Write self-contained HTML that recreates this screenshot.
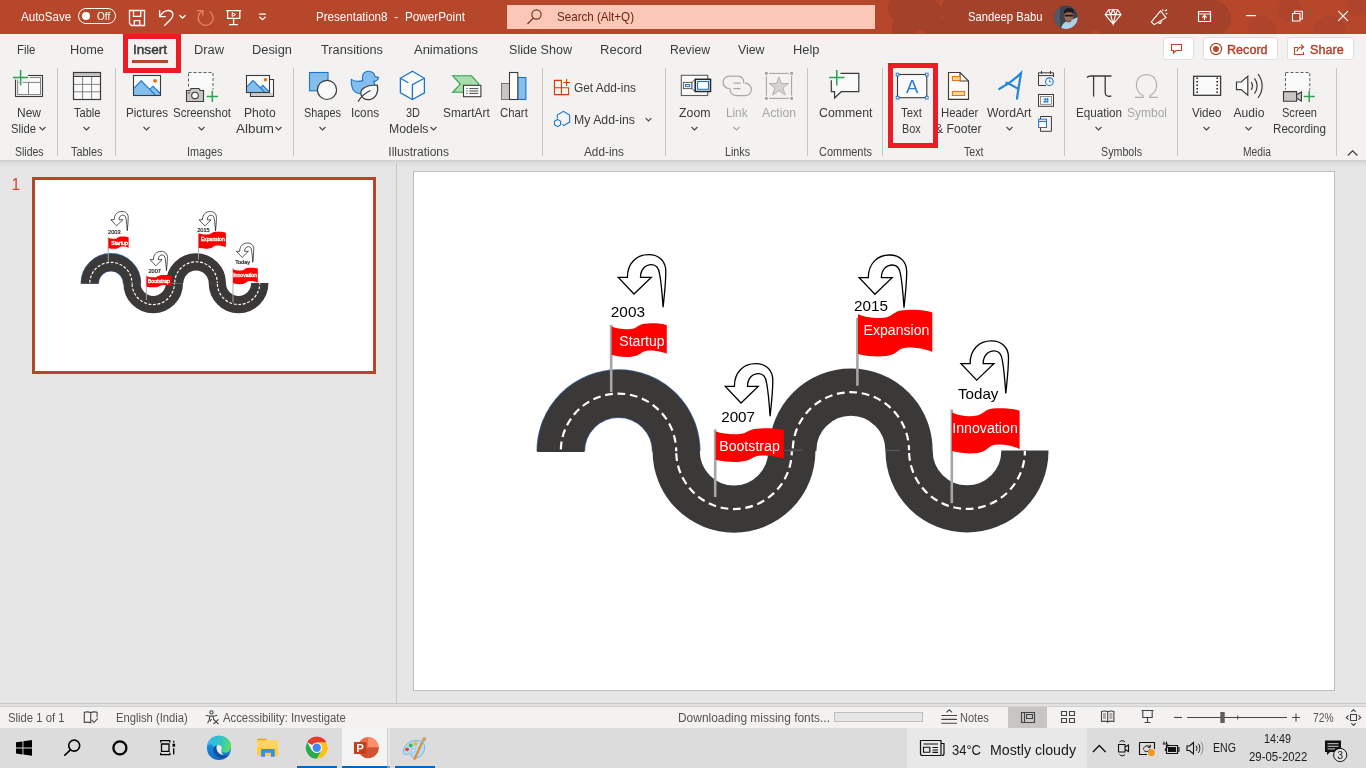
<!DOCTYPE html>
<html lang="en"><head><meta charset="utf-8"><title>Presentation8 - PowerPoint</title>
<style>
html,body{margin:0;padding:0;background:#e6e6e6;}
body{width:1366px;height:768px;overflow:hidden;font-family:"Liberation Sans",sans-serif;}
#app{position:relative;width:1366px;height:768px;overflow:hidden;background:#e6e6e6;}
#app div{position:absolute;box-sizing:border-box;}
svg.icons{position:absolute;left:0;top:0;will-change:transform;}
span.t{position:absolute;white-space:nowrap;display:inline-block;transform-origin:0 50%;}
#app #txt{left:0;top:0;width:1366px;height:768px;will-change:transform;pointer-events:none;}
</style></head>
<body>
<div id="app">
<!-- title bar -->
<div style="left:0;top:0;width:1366px;height:34px;background:#b7472a;overflow:hidden;">
  <svg width="1366" height="34" viewBox="0 0 1366 34" style="position:absolute;left:0;top:0;">
    <g fill="#a4412a">
      <circle cx="903" cy="8" r="15"/><circle cx="925" cy="14" r="17"/><circle cx="905" cy="27" r="13"/><circle cx="938" cy="30" r="12"/>
      <path d="M945 0 H1215 C1232 6 1238 22 1222 34 H1100 C1098 29 1094 29 1090 34 H945 C950 24 935 10 945 0 Z"/>
    </g>
    <g fill="#ae442b">
      <circle cx="1262" cy="30" r="14"/><circle cx="1290" cy="10" r="12"/><circle cx="1330" cy="32" r="16"/><circle cx="1357" cy="6" r="10"/>
    </g>
  </svg>
</div>
<div style="left:507px;top:5px;width:368px;height:24px;background:#fbc8b7;"></div>
<div style="left:78px;top:7.7px;width:38px;height:16.6px;border:1.2px solid #fff;border-radius:8.3px;"></div>
<div style="left:81.7px;top:12px;width:8px;height:8px;border-radius:50%;background:#fff;"></div>
<!-- avatar -->
<div style="left:1054px;top:5px;width:24px;height:24px;">
<svg width="24" height="24" viewBox="0 0 24 24" style="position:absolute;left:0;top:0;">
  <clipPath id="av"><circle cx="12" cy="12.300" r="11.700"/></clipPath>
  <g clip-path="url(#av)">
    <rect width="24" height="24" fill="#3d4450"/>
    <rect x="0" y="0" width="6" height="24" fill="#4f5a68"/>
    <path d="M7 24 C8 18 12 16 16 15.500 L24 12 V24 Z" fill="#a9d3e8"/>
    <ellipse cx="14.800" cy="10.800" rx="4.600" ry="5.600" fill="#9a6a58"/>
    <path d="M9.800 9 C9.500 4 13 2.500 16 3 C19.500 3.500 20.500 6.500 19.800 9 C18 6.800 13 6.500 9.800 9 Z" fill="#1d1a1c"/>
    <path d="M10.800 9.800 H19 V11.600 H15.500 L15 10.800 L14.500 11.600 H10.800 Z" fill="#17171a"/>
    <path d="M12.500 15 C14 16.600 16 16.400 17.500 14.800 L17 17 L13 17.500 Z" fill="#7d5345"/>
  </g>
</svg>
</div>
<!-- ribbon -->
<div style="left:0;top:34px;width:1366px;height:126px;background:#f3f2f1;"></div>
<div style="left:0;top:160px;width:1366px;height:7px;background:linear-gradient(#cfcfcf,#dcdcdc 40%,#e6e6e6);"></div>
<!-- right buttons -->
<div style="left:1163px;top:37px;width:31px;height:23px;background:#fff;border:1px solid #e1dfdd;border-radius:3px;"></div>
<div style="left:1203px;top:37px;width:75px;height:23px;background:#fff;border:1px solid #e1dfdd;border-radius:3px;"></div>
<div style="left:1287px;top:37px;width:67px;height:23px;background:#fff;border:1px solid #e1dfdd;border-radius:3px;"></div>
<!-- insert underline + red boxes -->
<div style="left:132px;top:59.5px;width:36px;height:3px;background:#b7472a;"></div>
<div style="left:123px;top:34px;width:58px;height:39px;border:5px solid #ed1c24;z-index:5;"></div>
<div style="left:888px;top:63px;width:50px;height:84.5px;border:5px solid #ed1c24;z-index:5;"></div>
<!-- group separators -->
<div style="left:57px;top:68px;width:1px;height:88px;background:#c8c6c4;"></div>
<div style="left:115px;top:68px;width:1px;height:88px;background:#c8c6c4;"></div>
<div style="left:293px;top:68px;width:1px;height:88px;background:#c8c6c4;"></div>
<div style="left:542px;top:68px;width:1px;height:88px;background:#c8c6c4;"></div>
<div style="left:665px;top:68px;width:1px;height:88px;background:#c8c6c4;"></div>
<div style="left:807px;top:68px;width:1px;height:88px;background:#c8c6c4;"></div>
<div style="left:882px;top:68px;width:1px;height:88px;background:#c8c6c4;"></div>
<div style="left:1064px;top:68px;width:1px;height:88px;background:#c8c6c4;"></div>
<div style="left:1177px;top:68px;width:1px;height:88px;background:#c8c6c4;"></div>
<div style="left:1336px;top:68px;width:1px;height:88px;background:#c8c6c4;"></div>
<!-- workspace -->
<div style="left:396px;top:163px;width:1px;height:540px;background:#c6c6c6;"></div>
<div style="left:32px;top:177px;width:344px;height:197px;border:3px solid #b7452a;background:#fff;overflow:hidden;">
  <div style="left:0.5px;top:1px;width:337px;height:190px;will-change:transform;"><svg width="337" height="190" viewBox="0 0 920 518" style="position:absolute;left:0;top:0;">
<g transform="translate(-414,-172)">
<path d="M560.8 451.3 A57.7 57.7 0 0 1 676.2 451.3" fill="none" stroke="#3f64a8" stroke-width="50.5"/>
<path d="M560.8 451.90000000000003 V451.3 A57.7 57.7 0 0 1 676.2 451.3 V451.90000000000003" fill="none" stroke="#3b3838" stroke-width="47.2"/>
<path d="M676.2 450.7 V451.3 A57.8 57.8 0 0 0 791.8 451.3 V450.7" fill="none" stroke="#3b3838" stroke-width="47.2"/>
<path d="M792.8 450.90000000000003 V450.3 A58.1 58.1 0 0 1 909.0 450.3 V450.90000000000003" fill="none" stroke="#3b3838" stroke-width="47.2"/>
<path d="M909.1 450.4 V451.0 A57.9 57.9 0 0 0 1024.9 451.0 V450.4" fill="none" stroke="#3b3838" stroke-width="47.2"/>
<path d="M784 450.2 H803 M886 450.4 H900" stroke="#6b6969" stroke-width="0.8" fill="none"/>
<path d="M560.8 451.3 A57.7 57.7 0 0 1 676.2 451.3" fill="none" stroke="#fff" stroke-width="3.2" stroke-dasharray="7.8 4.7" stroke-dashoffset="-2"/>
<path d="M676.2 451.3 A57.8 57.8 0 0 0 791.8 451.3" fill="none" stroke="#fff" stroke-width="3.2" stroke-dasharray="7.8 4.7" stroke-dashoffset="-2"/>
<path d="M792.8 450.3 A58.1 58.1 0 0 1 909.0 450.3" fill="none" stroke="#fff" stroke-width="3.2" stroke-dasharray="7.8 4.7" stroke-dashoffset="-2"/>
<path d="M909.1 451.0 A57.9 57.9 0 0 0 1024.9 451.0" fill="none" stroke="#fff" stroke-width="3.2" stroke-dasharray="7.8 4.7" stroke-dashoffset="-2"/>
<path d="M611.2 324.8 V392" stroke="#a6a6a6" stroke-width="2.6" fill="none"/>
<path d="M715.2 429.4 V497" stroke="#a6a6a6" stroke-width="2.6" fill="none"/>
<path d="M857.4 317.7 V385.8" stroke="#a6a6a6" stroke-width="2.6" fill="none"/>
<path d="M951.8 409.5 V503.2" stroke="#a6a6a6" stroke-width="2.6" fill="none"/>
<path d="M611.7 326.4 C617.2 328.8 628.2 330.1 633.7 328.5 C638.1 326.8 639.2 323.4 648.1 323.4 C655.8 323.1 662.9 323.7 666.8 325.3 L666.8 353.7 C662.9 351.7 655.8 350.4 649.2 350.4 C642.6 350.4 641.5 353.7 637.0 355.4 C632.6 357.1 622.7 357.8 611.7 355.1 Z" fill="#ff0000"/>
<text x="619.3" y="346.4" font-family="Liberation Sans, sans-serif" font-size="14" fill="#fff" stroke="#fff" stroke-width="0.9" textLength="45.4" lengthAdjust="spacingAndGlyphs">Startup</text>
<path d="M715.7 431.4 C722.5 433.8 736.1 435.1 742.9 433.5 C748.4 431.8 749.8 428.4 760.6 428.4 C770.2 428.1 779.0 428.7 783.8 430.3 L783.8 458.7 C779.0 456.7 770.2 455.4 762.0 455.4 C753.8 455.4 752.5 458.7 747.0 460.4 C741.6 462.1 729.3 462.8 715.7 460.1 Z" fill="#ff0000"/>
<text x="719.2" y="451.4" font-family="Liberation Sans, sans-serif" font-size="14" fill="#fff" stroke="#fff" stroke-width="0.9" textLength="60.6" lengthAdjust="spacingAndGlyphs">Bootstrap</text>
<path d="M858.0 314.2 C865.4 317.5 880.3 319.3 887.7 317.0 C893.7 314.7 895.1 310.0 907.0 310.0 C917.4 309.5 927.1 310.5 932.3 312.6 L932.3 352.0 C927.1 349.2 917.4 347.4 908.5 347.4 C899.6 347.4 898.1 352.0 892.2 354.4 C886.2 356.7 872.9 357.6 858.0 353.9 Z" fill="#ff0000"/>
<text x="863.5" y="335.3" font-family="Liberation Sans, sans-serif" font-size="14" fill="#fff" stroke="#fff" stroke-width="0.9" textLength="65.9" lengthAdjust="spacingAndGlyphs">Expansion</text>
<path d="M951.9 412.4 C958.7 415.6 972.2 417.4 979.0 415.1 C984.4 412.8 985.8 408.3 996.6 408.3 C1006.1 407.8 1014.9 408.8 1019.6 410.8 L1019.6 449.2 C1014.9 446.4 1006.1 444.6 997.9 444.6 C989.8 444.6 988.5 449.2 983.0 451.4 C977.6 453.7 965.4 454.6 951.9 451.0 Z" fill="#ff0000"/>
<text x="952.2" y="433.0" font-family="Liberation Sans, sans-serif" font-size="14" fill="#fff" stroke="#fff" stroke-width="0.9" textLength="65.6" lengthAdjust="spacingAndGlyphs">Innovation</text>
<text x="610.8" y="316.8" font-family="Liberation Sans, sans-serif" font-size="14.2" fill="#222" stroke="#222" stroke-width="0.5" textLength="34.2" lengthAdjust="spacingAndGlyphs">2003</text>
<text x="721.2" y="422.4" font-family="Liberation Sans, sans-serif" font-size="14.2" fill="#222" stroke="#222" stroke-width="0.5" textLength="33.8" lengthAdjust="spacingAndGlyphs">2007</text>
<text x="854.1" y="310.7" font-family="Liberation Sans, sans-serif" font-size="14.2" fill="#222" stroke="#222" stroke-width="0.5" textLength="34.0" lengthAdjust="spacingAndGlyphs">2015</text>
<text x="958.0" y="399.4" font-family="Liberation Sans, sans-serif" font-size="14.2" fill="#222" stroke="#222" stroke-width="0.5" textLength="40.4" lengthAdjust="spacingAndGlyphs">Today</text>
<path transform="translate(618.3 277.4)" d="M0 0 L9.1 0 C9.1 -14 18 -22.7 30.3 -22.7 C41 -22.7 47.5 -16 47.5 -6 C47.5 6 46 18 44.8 29.9 C44 18 43 6 41.4 -3 C40.5 -9.5 37.5 -12.7 33.3 -12.7 C27 -12.7 22.2 -8 22.2 0 L32.9 0 L15.7 16.6 Z" fill="#fff" stroke="#000" stroke-width="1.8" stroke-linejoin="miter"/>
<path transform="translate(725.3 386.4)" d="M0 0 L9.1 0 C9.1 -14 18 -22.7 30.3 -22.7 C41 -22.7 47.5 -16 47.5 -6 C47.5 6 46 18 44.8 29.9 C44 18 43 6 41.4 -3 C40.5 -9.5 37.5 -12.7 33.3 -12.7 C27 -12.7 22.2 -8 22.2 0 L32.9 0 L15.7 16.6 Z" fill="#fff" stroke="#000" stroke-width="1.8" stroke-linejoin="miter"/>
<path transform="translate(859.2 277.7)" d="M0 0 L9.1 0 C9.1 -14 18 -22.7 30.3 -22.7 C41 -22.7 47.5 -16 47.5 -6 C47.5 6 46 18 44.8 29.9 C44 18 43 6 41.4 -3 C40.5 -9.5 37.5 -12.7 33.3 -12.7 C27 -12.7 22.2 -8 22.2 0 L32.9 0 L15.7 16.6 Z" fill="#fff" stroke="#000" stroke-width="1.8" stroke-linejoin="miter"/>
<path transform="translate(961 363.6)" d="M0 0 L9.1 0 C9.1 -14 18 -22.7 30.3 -22.7 C41 -22.7 47.5 -16 47.5 -6 C47.5 6 46 18 44.8 29.9 C44 18 43 6 41.4 -3 C40.5 -9.5 37.5 -12.7 33.3 -12.7 C27 -12.7 22.2 -8 22.2 0 L32.9 0 L15.7 16.6 Z" fill="#fff" stroke="#000" stroke-width="1.8" stroke-linejoin="miter"/>
</g></svg></div>
</div>
<div style="left:413px;top:171px;width:922px;height:520px;border:1px solid #bdbdbd;background:#fff;overflow:hidden;">
  <div style="left:0;top:0;width:920px;height:518px;will-change:transform;"><svg width="920" height="518" viewBox="0 0 920 518" style="position:absolute;left:0;top:0;">
<g transform="translate(-414,-172)">
<path d="M560.8 451.3 A57.7 57.7 0 0 1 676.2 451.3" fill="none" stroke="#3f64a8" stroke-width="48.6"/>
<path d="M560.8 451.90000000000003 V451.3 A57.7 57.7 0 0 1 676.2 451.3 V451.90000000000003" fill="none" stroke="#3b3838" stroke-width="47.2"/>
<path d="M676.2 450.7 V451.3 A57.8 57.8 0 0 0 791.8 451.3 V450.7" fill="none" stroke="#3b3838" stroke-width="47.2"/>
<path d="M792.8 450.90000000000003 V450.3 A58.1 58.1 0 0 1 909.0 450.3 V450.90000000000003" fill="none" stroke="#3b3838" stroke-width="47.2"/>
<path d="M909.1 450.4 V451.0 A57.9 57.9 0 0 0 1024.9 451.0 V450.4" fill="none" stroke="#3b3838" stroke-width="47.2"/>
<path d="M784 450.2 H803 M886 450.4 H900" stroke="#6b6969" stroke-width="0.8" fill="none"/>
<path d="M560.8 451.3 A57.7 57.7 0 0 1 676.2 451.3" fill="none" stroke="#fff" stroke-width="2.2" stroke-dasharray="7.8 4.7" stroke-dashoffset="-2"/>
<path d="M676.2 451.3 A57.8 57.8 0 0 0 791.8 451.3" fill="none" stroke="#fff" stroke-width="2.2" stroke-dasharray="7.8 4.7" stroke-dashoffset="-2"/>
<path d="M792.8 450.3 A58.1 58.1 0 0 1 909.0 450.3" fill="none" stroke="#fff" stroke-width="2.2" stroke-dasharray="7.8 4.7" stroke-dashoffset="-2"/>
<path d="M909.1 451.0 A57.9 57.9 0 0 0 1024.9 451.0" fill="none" stroke="#fff" stroke-width="2.2" stroke-dasharray="7.8 4.7" stroke-dashoffset="-2"/>
<path d="M611.2 324.8 V392" stroke="#a6a6a6" stroke-width="2.6" fill="none"/>
<path d="M715.2 429.4 V497" stroke="#a6a6a6" stroke-width="2.6" fill="none"/>
<path d="M857.4 317.7 V385.8" stroke="#a6a6a6" stroke-width="2.6" fill="none"/>
<path d="M951.8 409.5 V503.2" stroke="#a6a6a6" stroke-width="2.6" fill="none"/>
<path d="M611.7 326.4 C617.2 328.8 628.2 330.1 633.7 328.5 C638.1 326.8 639.2 323.4 648.1 323.4 C655.8 323.1 662.9 323.7 666.8 325.3 L666.8 353.7 C662.9 351.7 655.8 350.4 649.2 350.4 C642.6 350.4 641.5 353.7 637.0 355.4 C632.6 357.1 622.7 357.8 611.7 355.1 Z" fill="#ff0000"/>
<text x="619.3" y="346.4" font-family="Liberation Sans, sans-serif" font-size="14" fill="#fff" textLength="45.4" lengthAdjust="spacingAndGlyphs">Startup</text>
<path d="M715.7 431.4 C722.5 433.8 736.1 435.1 742.9 433.5 C748.4 431.8 749.8 428.4 760.6 428.4 C770.2 428.1 779.0 428.7 783.8 430.3 L783.8 458.7 C779.0 456.7 770.2 455.4 762.0 455.4 C753.8 455.4 752.5 458.7 747.0 460.4 C741.6 462.1 729.3 462.8 715.7 460.1 Z" fill="#ff0000"/>
<text x="719.2" y="451.4" font-family="Liberation Sans, sans-serif" font-size="14" fill="#fff" textLength="60.6" lengthAdjust="spacingAndGlyphs">Bootstrap</text>
<path d="M858.0 314.2 C865.4 317.5 880.3 319.3 887.7 317.0 C893.7 314.7 895.1 310.0 907.0 310.0 C917.4 309.5 927.1 310.5 932.3 312.6 L932.3 352.0 C927.1 349.2 917.4 347.4 908.5 347.4 C899.6 347.4 898.1 352.0 892.2 354.4 C886.2 356.7 872.9 357.6 858.0 353.9 Z" fill="#ff0000"/>
<text x="863.5" y="335.3" font-family="Liberation Sans, sans-serif" font-size="14" fill="#fff" textLength="65.9" lengthAdjust="spacingAndGlyphs">Expansion</text>
<path d="M951.9 412.4 C958.7 415.6 972.2 417.4 979.0 415.1 C984.4 412.8 985.8 408.3 996.6 408.3 C1006.1 407.8 1014.9 408.8 1019.6 410.8 L1019.6 449.2 C1014.9 446.4 1006.1 444.6 997.9 444.6 C989.8 444.6 988.5 449.2 983.0 451.4 C977.6 453.7 965.4 454.6 951.9 451.0 Z" fill="#ff0000"/>
<text x="952.2" y="433.0" font-family="Liberation Sans, sans-serif" font-size="14" fill="#fff" textLength="65.6" lengthAdjust="spacingAndGlyphs">Innovation</text>
<text x="610.8" y="316.8" font-family="Liberation Sans, sans-serif" font-size="14.2" fill="#000" textLength="34.2" lengthAdjust="spacingAndGlyphs">2003</text>
<text x="721.2" y="422.4" font-family="Liberation Sans, sans-serif" font-size="14.2" fill="#000" textLength="33.8" lengthAdjust="spacingAndGlyphs">2007</text>
<text x="854.1" y="310.7" font-family="Liberation Sans, sans-serif" font-size="14.2" fill="#000" textLength="34.0" lengthAdjust="spacingAndGlyphs">2015</text>
<text x="958.0" y="399.4" font-family="Liberation Sans, sans-serif" font-size="14.2" fill="#000" textLength="40.4" lengthAdjust="spacingAndGlyphs">Today</text>
<path transform="translate(618.3 277.4)" d="M0 0 L9.1 0 C9.1 -14 18 -22.7 30.3 -22.7 C41 -22.7 47.5 -16 47.5 -6 C47.5 6 46 18 44.8 29.9 C44 18 43 6 41.4 -3 C40.5 -9.5 37.5 -12.7 33.3 -12.7 C27 -12.7 22.2 -8 22.2 0 L32.9 0 L15.7 16.6 Z" fill="#fff" stroke="#000" stroke-width="1.3" stroke-linejoin="miter"/>
<path transform="translate(725.3 386.4)" d="M0 0 L9.1 0 C9.1 -14 18 -22.7 30.3 -22.7 C41 -22.7 47.5 -16 47.5 -6 C47.5 6 46 18 44.8 29.9 C44 18 43 6 41.4 -3 C40.5 -9.5 37.5 -12.7 33.3 -12.7 C27 -12.7 22.2 -8 22.2 0 L32.9 0 L15.7 16.6 Z" fill="#fff" stroke="#000" stroke-width="1.3" stroke-linejoin="miter"/>
<path transform="translate(859.2 277.7)" d="M0 0 L9.1 0 C9.1 -14 18 -22.7 30.3 -22.7 C41 -22.7 47.5 -16 47.5 -6 C47.5 6 46 18 44.8 29.9 C44 18 43 6 41.4 -3 C40.5 -9.5 37.5 -12.7 33.3 -12.7 C27 -12.7 22.2 -8 22.2 0 L32.9 0 L15.7 16.6 Z" fill="#fff" stroke="#000" stroke-width="1.3" stroke-linejoin="miter"/>
<path transform="translate(961 363.6)" d="M0 0 L9.1 0 C9.1 -14 18 -22.7 30.3 -22.7 C41 -22.7 47.5 -16 47.5 -6 C47.5 6 46 18 44.8 29.9 C44 18 43 6 41.4 -3 C40.5 -9.5 37.5 -12.7 33.3 -12.7 C27 -12.7 22.2 -8 22.2 0 L32.9 0 L15.7 16.6 Z" fill="#fff" stroke="#000" stroke-width="1.3" stroke-linejoin="miter"/>
</g></svg></div>
</div>
<!-- bottom lines/status -->
<div style="left:0;top:703px;width:1366px;height:1px;background:#c6c6c6;"></div>
<div style="left:0;top:704px;width:1366px;height:2px;background:#e1e1e1;"></div>
<div style="left:0;top:706px;width:1366px;height:1px;background:#d2d0ce;"></div>
<div style="left:0;top:707px;width:1366px;height:21px;background:#f3f2f1;"></div>
<div style="left:1008px;top:707px;width:39px;height:21px;background:#c8c6c4;"></div>
<div style="left:834px;top:712px;width:89px;height:10px;border:1px solid #bdbdbd;background:#e6e6e6;"></div>
<!-- taskbar -->
<div style="left:0;top:728px;width:1366px;height:40px;background:#dcdcdc;"></div>
<div style="left:342px;top:728px;width:44.500px;height:40px;background:#f4f4f4;"></div>
<div style="left:386.500px;top:728px;width:1px;height:40px;background:#cfcfcf;"></div><div style="left:387.500px;top:728px;width:2.500px;height:40px;background:#e6e6e6;"></div>
<div style="left:907px;top:728px;width:180px;height:40px;background:#e8e8e8;"></div>
<div style="left:297px;top:766px;width:40px;height:2px;background:#0067c0;"></div>
<div style="left:342px;top:766px;width:45px;height:2px;background:#0067c0;"></div>
<div style="left:387px;top:766px;width:3px;height:2px;background:#5c9fdb;"></div>
<div style="left:395px;top:766px;width:40px;height:2px;background:#0067c0;"></div>

<svg class="icons" width="1366" height="768" viewBox="0 0 1366 768">
<g fill="none" stroke-linecap="butt" stroke-linejoin="miter">
<!-- ===== TITLE BAR ICONS ===== -->
<g stroke="#fff" stroke-width="1.3">
  <!-- save -->
  <path d="M129.500 10.500 H144.500 V25.500 H131.500 L129.500 23.500 Z"/>
  <path d="M133.500 10.500 V16.300 H140.700 V10.500"/>
  <path d="M134.300 25.500 V20.600 H139.800 V25.500"/>
  <!-- undo -->
  <path d="M159.600 10.200 V16.600 H165.800"/>
  <path d="M160 16.200 C162.200 12.400 165.500 10.400 168.600 10.500 C173.200 10.700 174.200 15.400 171.300 18.800 L164.300 25.800"/>
  <path d="M179.400 15.100 L182.500 18 L185.600 15.100"/>
  <!-- present -->
  <path d="M226.100 10.700 H241.100 M227.600 10.700 V18.300 H239.800 V10.700 M233.600 18.300 V24.600 M229.100 24.600 H237.900"/>
  <path d="M232.200 12.700 L235.600 14.600 L232.200 16.500 Z" stroke-width="1"/>
  <!-- customize -->
  <path d="M259.100 14.100 H265.900 M259.400 16.800 L262.500 19.700 L265.600 16.800"/>
</g>
<!-- redo (dim) -->
<g stroke="#e8826a" stroke-width="1.3">
  <path d="M197.200 10.600 H202.800 V15.800"/>
  <path d="M202.400 11.200 A7.500 7.500 0 1 0 209.600 11.500"/>
</g>
<!-- search glass -->
<g stroke="#7a3020" stroke-width="1.2">
  <circle cx="536.5" cy="14.5" r="4.6"/>
  <path d="M533.3 18 L527.5 24"/>
</g>
<!-- right title icons -->
<g stroke="#fff" stroke-width="1.2">
  <!-- diamond -->
  <path d="M1108.600 9.800 H1117.800 L1121 14.600 L1113.100 24 L1105.200 14.600 Z M1105.200 14.600 H1121 M1108.600 9.800 L1110.600 14.600 L1113.100 24 L1115.600 14.600 L1117.800 9.800 M1110.600 14.600 L1113.100 9.800 L1115.600 14.600" stroke-width="1.100"/>
  <!-- megaphone -->
  <path d="M1160.600 10.800 L1151.300 22 L1154.200 24.600 L1165.900 17.600 Z M1158.300 22.200 C1158.800 23.600 1160.300 23.800 1161 22.700 C1161.500 21.900 1161.300 21 1160.800 20.600 M1162.500 9.300 L1163 11 M1164.800 11.200 L1167 9.500 M1165.700 13.600 H1167.300" stroke-width="1.100"/>
  <!-- ribbon display -->
  <path d="M1198.5 11.5 H1210.5 V21.5 H1198.5 Z M1198.5 14 H1210.5 M1204.5 20 V15.5 M1202.3 17.6 L1204.5 15.4 L1206.7 17.6"/>
  <!-- min / max / close -->
  <path d="M1246 15.600 H1256"/>
  <path d="M1292.500 13.500 H1300 V21 H1292.500 Z M1294.500 13.300 V11.300 H1302.300 V19 H1300.300" stroke-width="1.100"/>
  <path d="M1338.300 11.200 L1347.900 20.800 M1347.900 11.200 L1338.300 20.800"/>
</g>
<!-- ===== TOP RIGHT BUTTON ICONS ===== -->
<g stroke="#b7472a" stroke-width="1.2">
  <path d="M1171.5 44.5 H1181.5 V50.5 H1176 L1173.5 53 V50.5 H1171.5 Z"/>
  <circle cx="1216" cy="49" r="5.6"/>
  <circle cx="1216" cy="49" r="2.9" fill="#b7472a" stroke="none"/>
  <path d="M1298 47.5 H1294.5 V54.5 H1303.5 V52 M1297 51.5 C1297.5 48.5 1299.5 47 1302.5 47 M1301 44.5 L1303.5 47 L1301 49.5"/>
</g>
<!-- ribbon collapse chevron -->
<path d="M1347.800 155.500 L1352.600 150.900 L1357.400 155.500" stroke="#3b3a39" stroke-width="1.200"/>
<!-- dropdown chevrons in ribbon -->
<g stroke="#444" stroke-width="1.1">
  <path d="M39.5 127 L42.5 130 L45.5 127"/>
  <path d="M83.5 127 L86.5 130 L89.5 127"/>
  <path d="M143.5 127 L146.5 130 L149.5 127"/>
  <path d="M198.5 127 L201.5 130 L204.5 127"/>
  <path d="M275.5 127 L278.5 130 L281.5 127"/>
  <path d="M319.5 127 L322.5 130 L325.5 127"/>
  <path d="M430.5 127 L433.5 130 L436.5 127"/>
  <path d="M645.600 118.100 L648.500 120.900 L651.400 118.100"/>
  <path d="M691.5 127 L694.5 130 L697.5 127"/>
  <path d="M1006.5 127 L1009.5 130 L1012.5 127"/>
  <path d="M1095.5 127 L1098.5 130 L1101.5 127"/>
  <path d="M1203.5 127 L1206.5 130 L1209.5 127"/>
  <path d="M1245.5 127 L1248.5 130 L1251.5 127"/>
</g>
<path d="M733.5 127 L736.5 130 L739.5 127" stroke="#a6a6a6" stroke-width="1.1"/>
</g>
<!-- ===== RIBBON ICONS ===== -->
<g fill="none" stroke-linejoin="miter">
<!-- New Slide -->
<g>
  <rect x="15.5" y="75.5" width="27" height="21" fill="#f3f2f1" stroke="#3b3a39" stroke-width="1.1"/>
  <rect x="17.7" y="77.6" width="22.8" height="17" fill="#fafafa" stroke="#797775" stroke-width="0.9"/>
  <path d="M17.7 82.4 H40.5 M28.5 82.4 V94.6" stroke="#797775" stroke-width="0.9"/>
  <path d="M11.5 73 H28.1 V79.6 H11.5 Z" fill="#f3f2f1" stroke="none"/>
  <path d="M28.1 76.4 H30 V79 H28.1 Z M18.6 79.6 H22.5 V86.8 H18.6 Z" fill="#f8f7f7" stroke="none"/>
  <path d="M13 77.6 H28.2 M20.6 70 V85.3" stroke="#2ea150" stroke-width="1.5"/>
</g>
<!-- Table -->
<g>
  <rect x="73.5" y="72.5" width="27" height="27" fill="#fafafa" stroke="none"/>
  <rect x="73.5" y="72.5" width="27" height="4" fill="#c8c6c4" stroke="none"/>
  <path d="M82.6 76.5 V99.5 M91.6 76.5 V99.5 M73.5 84.4 H100.5 M73.5 91.8 H100.5" stroke="#797775" stroke-width="0.9"/>
  <path d="M73.5 76.5 H100.5" stroke="#3b3a39" stroke-width="1"/>
  <rect x="73.5" y="72.5" width="27" height="27" stroke="#3b3a39" stroke-width="1.2"/>
</g>
<!-- Pictures -->
<g>
  <rect x="133.5" y="75.5" width="27" height="20" fill="#fafafa" stroke="none"/>
  <path d="M134 88.2 L141.2 80.9 L149.8 89.4 L153 86.2 L160 93.2 V95 H134 Z" fill="#83beec" stroke="none"/>
  <path d="M134 88.2 L141.2 80.9 L155.400 95.100 M149.8 89.4 L153 86.2 L160.300 93.500" stroke="#1e74c8" stroke-width="1.1" fill="none"/>
  <circle cx="155.1" cy="80.8" r="1.9" fill="#e27100"/>
  <rect x="133.5" y="75.5" width="27" height="20" stroke="#3b3a39" stroke-width="1.1"/>
</g>
<!-- Screenshot -->
<g>
  <rect x="188.5" y="72.5" width="24.5" height="20" fill="#fafafa" stroke="#605e5c" stroke-width="1" stroke-dasharray="3 2"/>
  <path d="M184 88 H205.5 V103 H184 Z M205.5 89.5 H219 V103 H205.5 Z" fill="#f3f2f1" stroke="none"/>
  <path d="M186.5 90.5 H189.8 L191 88.5 H199 L200.2 90.5 H203.5 V101.5 H186.5 Z" fill="#c8c6c4" stroke="#3b3a39" stroke-width="1.1"/>
  <circle cx="195" cy="95.6" r="3.3" fill="#fafafa" stroke="#3b3a39" stroke-width="1.1"/>
  <rect x="188.2" y="92.2" width="1.4" height="1.4" fill="#3b3a39"/>
  <path d="M206.7 96.4 H218 M212.3 90.8 V102" stroke="#2ea150" stroke-width="1.5"/>
</g>
<!-- Photo Album -->
<g>
  <path d="M250.5 79.5 H273.5 V96.5 H250.5 Z" fill="#fafafa" stroke="#3b3a39" stroke-width="1.1"/>
  <path d="M251 93 H273 V96 H251 Z" fill="#cfcdcb"/>
  <rect x="246.5" y="75.5" width="23" height="17" fill="#fafafa" stroke="none"/>
  <path d="M247 86.600 L253 80.500 L260.300 87.800 L262.800 85.300 L269 91.500 V92 H247 Z" fill="#83beec" stroke="none"/>
  <path d="M247 86.600 L253 80.500 L264.500 92 M260.300 87.800 L262.800 85.300 L269.300 91.800" stroke="#1e74c8" stroke-width="1.1"/>
  <circle cx="265.4" cy="79.7" r="1.7" fill="#e27100"/>
  <rect x="246.5" y="75.5" width="23" height="17" stroke="#3b3a39" stroke-width="1.1"/>
</g>
<!-- Shapes -->
<g>
  <rect x="309.5" y="72.5" width="18.5" height="18.3" fill="#83beec" stroke="#1e74c8" stroke-width="1.1"/>
  <circle cx="327" cy="89.9" r="9.6" fill="#fafafa" stroke="#3b3a39" stroke-width="1.2"/>
</g>
<!-- Icons (duck + leaf) -->
<g>
  <path d="M351.3 79.4 C354 81.2 358 82 362.8 80.6 C361.2 76 363.5 71.6 368.2 71.2 C372.5 71 375 74 374.8 76.6 L378.6 77.4 C378 80 376 81.4 373.6 81.4 C376.5 85.5 375 91 370 93 C362 95.2 354.5 93.5 352.5 88.5 C351.3 85.5 351 82.5 351.3 79.4 Z" fill="#83beec" stroke="#1e74c8" stroke-width="1.1"/>
  <path d="M377.3 85 C378.8 92 376 98.6 369.5 99.6 C365 100.2 361 97.5 360.8 93.5 C360.6 88 367 85 377.3 85 Z" fill="#fafafa" stroke="#3b3a39" stroke-width="1.2"/>
  <path d="M358.2 101.6 C361 96.5 365.5 92.8 370.5 90.5" stroke="#3b3a39" stroke-width="1.2"/>
</g>
<!-- 3D cube -->
<g stroke="#1e74c8" stroke-width="1.3">
  <path d="M412.4 71.2 L424.4 78.3 V92.9 L412.4 99.6 L400.4 92.9 V78.3 Z" fill="#fafafa"/>
  <path d="M424.4 78.3 L412.4 84.7 V99.6 M400.4 78.3 L408.4 82.8"/>
</g>
<!-- SmartArt -->
<g>
  <path d="M452.6 75.8 H471.4 L479 84 L471.4 92.3 H452.6 L460.3 84 Z" fill="#a9dcab" stroke="#2ea150" stroke-width="1.1"/>
  <rect x="463.5" y="85.3" width="17.4" height="11.4" fill="#fafafa" stroke="#3b3a39" stroke-width="1.1"/>
  <path d="M469.3 88.6 H478.3 M469.3 91 H478.3 M469.3 93.4 H478.3 M466.3 88.6 H467.6 M466.3 91 H467.6 M466.3 93.4 H467.6" stroke="#3b3a39" stroke-width="0.9"/>
</g>
<!-- Chart -->
<g>
  <rect x="501.5" y="83.5" width="8" height="16" fill="#c8c6c4" stroke="#797775" stroke-width="1"/>
  <rect x="517.7" y="77.5" width="8.2" height="22" fill="#83beec" stroke="#1e74c8" stroke-width="1.1"/>
  <rect x="509.5" y="72.5" width="8.3" height="27" fill="#fff" stroke="#3b3a39" stroke-width="1.1"/>
</g>
<!-- Get add-ins -->
<g stroke="#d83b01" stroke-width="1.1">
  <path d="M554.400 80.400 H561.400 V87.800 H554.400 Z M554.400 87.800 V94.600 H561.400 V87.800 M561.400 94.600 H568.600 V87.800 H561.400"/>
  <path d="M563.300 82.500 H570 M566.600 79 V86"/>
</g>
<!-- My add-ins -->
<g stroke="#1e74c8" stroke-width="1.1">
  <path d="M557.300 118.600 V115 L563.450 111.400 L569.600 115 V122.100 L563.900 125.400 L562.300 124.500" fill="none"/>
  <path d="M557.600 119.400 L560.600 121.200 V124.700 L557.600 126.600 L554.500 124.700 V121.200 Z" fill="#fafafa"/>
</g>
<!-- Zoom -->
<g>
  <rect x="681.300" y="75.300" width="26.400" height="20.200" fill="#fafafa" stroke="#605e5c" stroke-width="1.1"/>
  <path d="M691.800 82.400 L695.300 79.300 V91.500 L691.800 88.600 Z" fill="#fafafa" stroke="#605e5c" stroke-width="1"/>
  <rect x="683.400" y="82.400" width="8.400" height="6.200" fill="#fafafa" stroke="#605e5c" stroke-width="1"/>
  <rect x="695.300" y="79.300" width="15.200" height="12.200" fill="#fafafa" stroke="#262626" stroke-width="1.5"/>
  <rect x="697.600" y="81.500" width="10.900" height="7.800" stroke="#1e74c8" stroke-width="1.1" fill="#fff"/>
  <rect x="685.500" y="84.500" width="4.100" height="2.100" stroke="#1e74c8" stroke-width="1" fill="#fff"/>
</g>
<!-- Link (disabled) -->
<g stroke="#a9a7a5" stroke-width="1.25">
  <path d="M729.400 88.600 A6.300 6.300 0 0 1 729.400 76 H737.600 A6.300 6.300 0 0 1 743.800 83.400 M733.400 88.600 H740.500"/>
  <path d="M745 83.100 A6.300 6.300 0 0 1 745 95.700 H736.300 A6.300 6.300 0 0 1 730.100 88.300 M733.400 83.100 H740.500"/>
</g>
<!-- Action (disabled) -->
<g>
  <path d="M769.100 73.400 H788.900 M769.100 98.400 H788.900 M766.400 76 V95.700 M791.600 76 V95.700" stroke="#a19f9d" stroke-width="1"/>
  <path d="M778.900 76.900 L781.300 83.500 L788.600 83.600 L782.800 87.900 L785.200 95 L778.900 90.700 L772.600 95 L775 87.900 L769.200 83.600 L776.500 83.500 Z" fill="#d6d4d2" stroke="#b3b0ad" stroke-width="1"/>
  <path d="M765.100 72.100 h2.600 v2.600 h-2.600 z M790.300 72.100 h2.600 v2.600 h-2.600 z M765.100 97.100 h2.600 v2.600 h-2.600 z M790.300 97.100 h2.600 v2.600 h-2.600 z" fill="#a19f9d"/>
</g>
<!-- Comment -->
<g>
  <path d="M831.300 73.400 H858.800 V91.700 H841.200 L834.600 98 V91.700 H831.300 Z" fill="#fafafa" stroke="none"/>
  <path d="M840.500 73.400 H858.800 V91.700 H841.200 L834.600 98 V91.700 H831.300 V80.200" fill="none" stroke="#3b3a39" stroke-width="1.200"/>
  <path d="M829.100 77.600 H844.500 M836.800 70.100 V85.500" stroke="#2ea150" stroke-width="1.500"/>
</g>
<!-- Text Box -->
<g>
  <rect x="897.5" y="74.5" width="29.3" height="23.2" fill="#fafafa" stroke="#3b3a39" stroke-width="1.1"/>
  <g fill="#fff" stroke="#1e74c8" stroke-width="0.9">
    <rect x="896.2" y="73.2" width="2.7" height="2.7"/><rect x="925.4" y="73.2" width="2.7" height="2.7"/>
    <rect x="896.2" y="96.3" width="2.7" height="2.7"/><rect x="925.4" y="96.3" width="2.7" height="2.7"/>
  </g>
  <text x="912.1" y="92.8" text-anchor="middle" font-family="Liberation Sans, sans-serif" font-size="18.5" fill="#2b7cd3" stroke="none">A</text>
</g>
<!-- Header & Footer -->
<g>
  <path d="M948.5 72.5 H960 L968.5 81 V99.4 H948.5 Z" fill="#fafafa" stroke="#3b3a39" stroke-width="1.1"/>
  <path d="M960 72.5 V81 H968.5" stroke="#3b3a39" stroke-width="1.1"/>
  <rect x="952.4" y="76.5" width="7.8" height="4.1" fill="#fbd491" stroke="#e27100" stroke-width="1"/>
  <rect x="952.4" y="91.4" width="12.2" height="4.1" fill="#fbd491" stroke="#e27100" stroke-width="1"/>
</g>
<!-- WordArt -->
<g stroke="#2b88d8" stroke-width="2.3" stroke-linecap="round">
  <path d="M999.2 89 C1006 85.5 1015 79 1021 73.2 C1019.8 81 1018 91 1017 98.6"/>
  <path d="M1006.5 82.8 C1010 84.2 1014 86.3 1017.8 88.6"/>
</g>
<!-- date/time -->
<g>
  <path d="M1046 85.5 H1038.5 V72.8 H1053.5 V77" stroke="#3b3a39" stroke-width="1"/>
  <path d="M1038.5 75.6 H1053.5 M1041.5 71 V74 M1050.5 71 V74" stroke="#3b3a39" stroke-width="1"/>
  <circle cx="1049.4" cy="81.7" r="3.8" fill="#fafafa" stroke="#1e74c8" stroke-width="1.1"/>
  <path d="M1049.4 79.5 V81.9 H1051.4" stroke="#1e74c8" stroke-width="0.9"/>
</g>
<!-- slide number -->
<g>
  <rect x="1038.5" y="94.5" width="15" height="11.8" fill="#fafafa" stroke="#3b3a39" stroke-width="1"/>
  <rect x="1040.5" y="96.5" width="11" height="7.8" stroke="#797775" stroke-width="0.8"/>
  <path d="M1043.5 99.2 H1049 M1043.2 101.6 H1048.7 M1045.4 97.8 L1044.8 103 M1047.6 97.8 L1047 103" stroke="#1e74c8" stroke-width="0.9"/>
</g>
<!-- object -->
<g>
  <path d="M1040.5 119 V116.5 H1051.4 V131.3 H1040.5 V128" stroke="#3b3a39" stroke-width="1"/>
  <rect x="1038.6" y="119.2" width="7.9" height="8.3" fill="#fafafa" stroke="#1e74c8" stroke-width="1"/>
  <path d="M1038.6 121.4 H1046.5" stroke="#1e74c8" stroke-width="1.1"/>
</g>
<!-- Equation pi -->
<g stroke="#3b3a39" stroke-width="1.3">
  <path d="M1087 77.5 C1088 76.3 1089.5 76 1091 76 H1111.5"/>
  <path d="M1093.6 76 V96.6"/>
  <path d="M1105.2 76 V92.5 C1105.2 95.5 1107.5 97 1111.3 96"/>
</g>
<!-- Symbol omega -->
<g stroke="#b3b0ad" stroke-width="1.3">
  <path d="M1135 97.3 H1143.2 V95.8 C1132.5 90 1135 74.6 1146.5 74.6 C1158 74.6 1160.500 90 1149.800 95.8 V97.3 H1158"/>
</g>
<!-- Video -->
<g>
  <rect x="1193.6" y="76.3" width="27" height="19" fill="#fafafa" stroke="#3b3a39" stroke-width="1.3"/>
  <path d="M1197.2 77.5 V95 M1217.2 77.5 V95" stroke="#1b1a19" stroke-width="1.5" stroke-dasharray="1.6 1.9"/>
</g>
<!-- Audio -->
<g stroke="#3b3a39" stroke-width="1.2">
  <path d="M1236.5 82 H1241.2 L1247.8 76.3 V95.3 L1241.2 89.6 H1236.5 Z" fill="#fafafa"/>
  <path d="M1251.2 82.2 C1252.8 84.5 1252.8 87.5 1251.2 89.8"/>
  <path d="M1254.5 78.4 C1258 83 1258 89 1254.5 93.6"/>
  <path d="M1258 74.200 C1263.500 81 1263.500 91 1258 97.8"/>
</g>
<!-- Screen recording -->
<g>
  <rect x="1285.5" y="72.5" width="24.3" height="20" fill="#fafafa" stroke="#605e5c" stroke-width="1" stroke-dasharray="3 2"/>
  <path d="M1281 89.500 H1303.500 V103 H1281 Z M1303 90.500 H1316.500 V103 H1303 Z" fill="#f3f2f1"/>
  <path d="M1283.500 91.600 H1296.600 V101.300 H1283.500 Z" fill="#c8c6c4" stroke="#3b3a39" stroke-width="1.1"/>
  <path d="M1296.600 94.800 L1301.400 92 V101 L1296.600 98.200 Z" fill="#c8c6c4" stroke="#3b3a39" stroke-width="1.1"/>
  <path d="M1303.600 96.500 H1314.800 M1309.200 90.900 V102.100" stroke="#2ea150" stroke-width="1.5"/>
</g>
</g>
<!-- ===== STATUS BAR ICONS ===== -->
<g fill="none" stroke="#444" stroke-width="1.1">
  <!-- spell book -->
  <path d="M90.700 712.600 C88.600 711.700 86.400 711.700 84.300 712.300 V722.500 C86.400 722 88.600 722 90.700 722.800 V712.600 C92.800 711.700 95 711.700 97.100 712.300 V717.200"/>
  <path d="M91.700 719.800 L94 722.500 L97.800 718.300"/>
  <!-- accessibility -->
  <circle cx="211.500" cy="712.400" r="1.600"/>
  <path d="M205.800 715.200 C209.500 716.400 213.500 716.400 217.200 715.200 M209.800 716.200 C209.800 719 209 721 207.600 723.300 M213.200 716.200 C213.200 718 213.500 719 214 720 M211.500 719 L210 721.500"/>
  <path d="M213.500 719.300 L218.500 724 M218.500 719.300 L213.500 724"/>
  <!-- notes -->
  <path d="M941.300 715.500 H957 M941.300 719.400 H957 M941.300 723.300 H957 M946.500 712.300 L949.300 709.800 L952.100 712.300"/>
  <!-- normal view -->
  <path d="M1021.500 712.500 H1034.500 V722.500 H1021.500 Z M1024.500 712.500 V722.500 M1026.500 714.500 H1032.500 V718.500 H1026.500 Z"/>
  <!-- sorter -->
  <path d="M1061.500 711.500 H1066.500 V715.500 H1061.500 Z M1069.500 711.500 H1074.500 V715.500 H1069.500 Z M1061.500 718.500 H1066.500 V722.500 H1061.500 Z M1069.500 718.500 H1074.500 V722.500 H1069.500 Z"/>
  <!-- reading view -->
  <path d="M1107.700 711.800 C1105.500 710.800 1103.500 710.800 1101.500 711.500 V721.500 C1103.500 720.900 1105.500 720.900 1107.700 721.900 C1109.900 720.900 1111.900 720.900 1113.900 721.500 V711.500 C1111.900 710.800 1109.900 710.800 1107.700 711.800 Z M1107.700 711.800 V721.900"/>
  <path d="M1103 714 H1106 M1103 716 H1106 M1103 718 H1106 M1109.400 714 H1112.400 M1109.400 716 H1112.400 M1109.400 718 H1112.400" stroke-width="0.8"/>
  <!-- slideshow -->
  <path d="M1141.500 710.500 H1153.500 M1142.800 710.500 V717.500 H1152.200 V710.500 M1147.500 717.500 V722.500 M1144.500 722.500 H1150.500"/>
  <!-- zoom controls -->
  <path d="M1174 717.500 H1182"/>
  <path d="M1187 717.500 H1287" stroke-width="1"/>
  <path d="M1237.700 715.500 V719.500" stroke-width="1"/>
  <path d="M1292 717.500 H1300 M1296 713.500 V721.500"/>
  <!-- fit -->
  <path d="M1350.500 714.500 H1356.500 V720.500 H1350.500 Z M1351.300 711.800 L1353.500 709.600 L1355.700 711.800 M1351.300 723.200 L1353.500 725.400 L1355.700 723.200 M1348.500 715.300 L1346.300 717.500 L1348.500 719.700 M1358.500 715.300 L1360.700 717.500 L1358.500 719.700"/>
</g>
<rect x="1220.300" y="712" width="4.400" height="11" fill="#605e5c"/>
<!-- ===== TASKBAR ICONS ===== -->
<g>
  <!-- windows -->
  <path d="M16 742.300 L22.500 741.400 V747.500 H16 Z M23.400 741.300 L32 740.100 V747.500 H23.400 Z M16 748.400 H22.500 V754.500 L16 753.600 Z M23.400 748.400 H32 V755.800 L23.400 754.600 Z" fill="#000"/>
  <!-- search -->
  <circle cx="74.200" cy="745.600" r="5.500" fill="none" stroke="#000" stroke-width="1.600"/>
  <path d="M70.400 749.800 L64.300 755.600" stroke="#000" stroke-width="1.600" fill="none"/>
  <!-- cortana -->
  <circle cx="119.900" cy="747.900" r="6.500" fill="none" stroke="#000" stroke-width="2.300"/>
  <!-- task view -->
  <path d="M160 740.700 H170.500 M160 754.600 H170.500 M161.500 744 H169 V751.300 H161.500 Z M173.700 740.700 V742.600 M173.700 748.200 V754.600 M160.700 740.700 V742.500 M169.800 740.700 V742.500 M160.700 752.800 V754.600 M169.800 752.800 V754.600" fill="none" stroke="#000" stroke-width="1.300"/>
  <rect x="172.500" y="743.700" width="2.600" height="3" fill="#000"/>
  <!-- edge -->
  <g transform="translate(219 747.9)">
    <linearGradient id="eg1" x1="-10" y1="-6" x2="12" y2="0" gradientUnits="userSpaceOnUse"><stop offset="0" stop-color="#31b9ee"/><stop offset="0.55" stop-color="#35c8b8"/><stop offset="1" stop-color="#62e058"/></linearGradient>
    <linearGradient id="eg2" x1="0" y1="-4" x2="0" y2="12" gradientUnits="userSpaceOnUse"><stop offset="0" stop-color="#1c8fe0"/><stop offset="1" stop-color="#0f6ac4"/></linearGradient>
    <circle cx="0" cy="0" r="12.100" fill="url(#eg2)"/>
    <path d="M-11.900 -1.500 C-11.500 -8 -6 -12.200 0 -12.200 C7 -12.200 12.300 -7 12.100 -1.500 C12 2.500 9 4.800 5.500 4.800 C2.800 4.800 1.200 3.800 2.200 2.400 C3.600 0.400 2.600 -2.900 -0.600 -3 C-3 -3.100 -4.600 -1.800 -5.300 -0.300 C-6 -4 -9.500 -5 -11.900 -1.500 Z" fill="url(#eg1)"/>
    <path d="M-5.300 -0.300 C-6.300 3 -4.600 7.600 -0.500 9.700 C3.500 11.600 8 10.200 10.300 6.300 C7.600 8.200 3.200 7.800 0.300 5.600 C-2.300 3.500 -2.900 0.400 -2.200 -1.900 C-3.600 -2 -4.700 -1.400 -5.300 -0.300 Z" fill="#14529c"/>
    <path d="M-2.200 -1.900 C-2.900 0.400 -2.300 3.500 0.300 5.600 C1.600 6.500 3.300 7 5 7 C3.400 6.400 1.600 4.500 2.200 2.400 C3.600 0.400 2.600 -2.900 -0.600 -3 C-1.200 -3 -1.700 -2.600 -2.200 -1.900 Z" fill="#e9eef2"/>
  </g>
  <!-- explorer -->
  <path d="M257.100 741.800 V739.700 C257.100 739.200 257.500 738.800 258 738.800 H266.200 C266.700 738.800 267 739.200 267 739.700 L266.300 741.800 Z" fill="#e6a312"/>
  <rect x="257.100" y="740.300" width="21.100" height="15.700" rx="0.700" fill="#ffd65c"/>
  <path d="M257.100 748 H278.200 V755.300 C278.200 755.700 277.900 756 277.500 756 H257.800 C257.400 756 257.100 755.700 257.100 755.300 Z" fill="#ffcd44"/>
  <path d="M261.100 756.700 V749.800 C261.100 749.300 261.500 749 262 749 H273.800 C274.300 749 274.700 749.300 274.700 749.800 V756.700 H270.900 V752.700 H265 V756.700 Z" fill="#3391de"/>
  <!-- chrome -->
  <circle cx="316.800" cy="747.700" r="11" fill="#fff"/>
  <path d="M316.800 747.700 L307.270 742.200 A11 11 0 0 1 326.330 742.200 Z" fill="#e33b2e"/>
  <path d="M307.270 742.200 A11 11 0 0 1 326.330 742.200 H316.800 Z" fill="#e33b2e"/>
  <path d="M326.330 742.200 A11 11 0 0 1 316.800 758.700 L321.560 750.450 L316.800 742.200 Z" fill="#fcc31e"/>
  <path d="M316.800 758.700 A11 11 0 0 1 307.270 742.200 L312.040 750.450 L321.560 750.450 Z" fill="#2da94f"/>
  <circle cx="316.800" cy="747.700" r="5.300" fill="#fff"/>
  <circle cx="316.800" cy="747.700" r="4.200" fill="#4285f4"/>
  <!-- powerpoint -->
  <circle cx="368.200" cy="747.600" r="10.500" fill="#ed6c47"/>
  <path d="M368.200 737.100 A10.500 10.500 0 0 1 378.700 747.600 H368.200 Z" fill="#ff8f6b"/>
  <path d="M368.200 747.600 H378.700 A10.500 10.500 0 0 1 361 755.300 L368.200 747.600 Z" fill="#d35230"/>
  <rect x="353.900" y="742.100" width="12.600" height="11.800" rx="0.800" fill="#c43e1c"/>
  <!-- paint -->
  <path d="M403.200 751.600 C403.400 745.500 409.500 740.400 416.500 740.400 C422 740.400 425.300 744 424.700 748.500 C424.100 753 420.500 757.500 415.500 758 C412 758.300 411 756.500 411.200 755 C411.500 753.300 410 752.800 408.500 753.800 C406.500 755.200 403.200 754.500 403.200 751.600 Z" fill="#b5daf1" stroke="#6aaad6" stroke-width="0.800"/>
  <circle cx="407.100" cy="749.300" r="1.900" fill="#e8443a"/>
  <circle cx="410.700" cy="745.400" r="1.900" fill="#42b649"/>
  <circle cx="415.500" cy="743.500" r="1.900" fill="#f5b324"/>
  <circle cx="412.900" cy="750.500" r="1.700" fill="#e4eff7" stroke="#7fb2d6" stroke-width="0.700"/>
  <path d="M421.300 744.200 L414.500 759" stroke="#e8892b" stroke-width="2.100" stroke-linecap="round"/>
  <path d="M422.400 741.800 L421.300 744.200" stroke="#9a9a9a" stroke-width="2" />
  <path d="M421.800 741.300 C421 739 423 736.800 425.600 737.300 C426.800 738.500 426 740.800 423.600 742.200 Z" fill="#c9a56a"/>
</g>
<text x="360.200" y="752.100" text-anchor="middle" font-family="Liberation Sans, sans-serif" font-weight="700" font-size="11.500" fill="#fff">P</text>
<!-- tray -->
<g fill="none" stroke="#111" stroke-width="1.200">
  <!-- news -->
  <path d="M920.500 740.500 H941 V755.500 H922.500 C921.300 755.500 920.500 754.700 920.500 753.500 Z M941 743.500 H944 V753.500 C944 754.700 943.200 755.500 942 755.500"/>
  <path d="M923.500 744 H938 M923.500 747.300 H929.800 V752.300 H923.500 Z M932.500 747.500 H938 M932.500 750 H938 M932.500 752.400 H938" stroke-width="1.100"/>
  <!-- chevron -->
  <path d="M1093 752 L1099.300 745.600 L1105.600 752" stroke-width="1.400"/>
  <!-- meet now -->
  <path d="M1118.500 744.500 H1125 V752 H1118.500 Z M1125 747 L1128.500 745 V751.500 L1125 749.500" stroke-width="1.100"/>
  <path d="M1119.500 742 C1120.500 740.300 1124 740.300 1125 742 M1119.500 754.500 C1120.500 756.200 1124 756.200 1125 754.500" stroke-width="1"/>
  <!-- sync/display -->
  <path d="M1139.500 742.500 H1154.500 V749 M1147 754.500 H1139.500 V742.500" stroke-width="1.100"/>
  <path d="M1143.500 749.500 C1143.500 746 1148 744.500 1150 747 M1150.300 744.800 V747.300 H1147.800 M1150 749 C1150 751.500 1146 752.500 1144 750.500" stroke-width="1"/>
  <!-- battery -->
  <path d="M1166.500 745.500 H1177.500 V753.500 H1166.500 Z M1177.500 747.700 H1179 V751.300 H1177.500" stroke-width="1.100"/>
  <path d="M1164 741.500 V744 M1166.500 741.500 V744 M1162.700 744 H1167.800 V746.500 C1167.800 748 1166.500 748.500 1165.300 748.500 V751" stroke-width="1"/>
  <!-- speaker -->
  <path d="M1187 746 H1189.500 L1193.500 742.500 V754 L1189.500 750.500 H1187 Z" stroke-width="1.100"/>
  <path d="M1196 745.700 C1197.200 747.300 1197.200 749.300 1196 750.900 M1198.300 743.700 C1200.300 746.300 1200.300 750.300 1198.300 752.900" stroke-width="1"/>
  <path d="M1200.800 741.800 C1203.600 745.500 1203.600 751 1200.800 754.800" stroke-width="1" stroke="#8a8a8a"/>
</g>
<rect x="1168" y="747" width="8" height="5" fill="#111"/>
<circle cx="1151.400" cy="752.700" r="3.400" fill="#f7941d"/>
<!-- notification -->
<path d="M1325 740.500 H1341 V752 H1330 L1327 755 V752 H1325 Z" fill="#111"/>
<path d="M1327.500 743.700 H1338.500 M1327.500 746.300 H1338.500 M1327.500 748.900 H1335" stroke="#e4e4e4" stroke-width="0.900" fill="none"/>
<circle cx="1340.200" cy="755" r="6.600" fill="#e4e4e4" stroke="#111" stroke-width="1"/>

</svg>
<div id="txt">
<span class="t" style="left:21.0px;top:7.5px;font-size:12.2px;line-height:18px;color:#ffffff;transform:scaleX(0.9497);">AutoSave</span>
<span class="t" style="left:97.0px;top:8.5px;font-size:10.4px;line-height:16px;color:#ffffff;transform:scaleX(0.9655);">Off</span>
<span class="t" style="left:315.5px;top:7.5px;font-size:12.2px;line-height:18px;color:#ffffff;transform:scaleX(0.9506);">Presentation8</span>
<span class="t" style="left:394.2px;top:7.5px;font-size:12.2px;line-height:18px;color:#ffffff;">-</span>
<span class="t" style="left:404.8px;top:7.5px;font-size:12.2px;line-height:18px;color:#ffffff;transform:scaleX(0.9610);">PowerPoint</span>
<span class="t" style="left:557.0px;top:7.5px;font-size:12.2px;line-height:18px;color:#6b2214;transform:scaleX(0.9512);">Search (Alt+Q)</span>
<span class="t" style="left:968.0px;top:7.5px;font-size:12.2px;line-height:18px;color:#ffffff;transform:scaleX(0.9237);">Sandeep Babu</span>
<span class="t" style="left:17.0px;top:41.1px;font-size:12.5px;line-height:19px;color:#3a3a3a;transform:scaleX(0.9178);">File</span>
<span class="t" style="left:69.7px;top:41.1px;font-size:12.5px;line-height:19px;color:#3a3a3a;transform:scaleX(1.0167);">Home</span>
<span class="t" style="left:132.5px;top:41.1px;font-size:12.5px;line-height:19px;color:#3a3a3a;-webkit-text-stroke:0.45px #3a3a3a;transform:scaleX(1.0875);">Insert</span>
<span class="t" style="left:194.0px;top:41.1px;font-size:12.5px;line-height:19px;color:#3a3a3a;transform:scaleX(1.0284);">Draw</span>
<span class="t" style="left:252.0px;top:41.1px;font-size:12.5px;line-height:19px;color:#3a3a3a;transform:scaleX(1.0277);">Design</span>
<span class="t" style="left:321.0px;top:41.1px;font-size:12.5px;line-height:19px;color:#3a3a3a;transform:scaleX(1.0219);">Transitions</span>
<span class="t" style="left:414.0px;top:41.1px;font-size:12.5px;line-height:19px;color:#3a3a3a;transform:scaleX(1.0349);">Animations</span>
<span class="t" style="left:509.0px;top:41.1px;font-size:12.5px;line-height:19px;color:#3a3a3a;transform:scaleX(1.0072);">Slide Show</span>
<span class="t" style="left:600.0px;top:41.1px;font-size:12.5px;line-height:19px;color:#3a3a3a;transform:scaleX(1.0423);">Record</span>
<span class="t" style="left:670.0px;top:41.1px;font-size:12.5px;line-height:19px;color:#3a3a3a;transform:scaleX(0.9756);">Review</span>
<span class="t" style="left:738.0px;top:41.1px;font-size:12.5px;line-height:19px;color:#3a3a3a;transform:scaleX(0.9860);">View</span>
<span class="t" style="left:793.0px;top:41.1px;font-size:12.5px;line-height:19px;color:#3a3a3a;transform:scaleX(1.0304);">Help</span>
<span class="t" style="left:1226.7px;top:41.1px;font-size:12.5px;line-height:19px;color:#b13f26;-webkit-text-stroke:0.4px #b13f26;transform:scaleX(1.0075);">Record</span>
<span class="t" style="left:1310.0px;top:41.1px;font-size:12.5px;line-height:19px;color:#b13f26;-webkit-text-stroke:0.4px #b13f26;transform:scaleX(1.0102);">Share</span>
<span class="t" style="left:17.0px;top:103.6px;font-size:12.1px;line-height:18px;color:#3a3a3a;transform:scaleX(0.9916);">New</span>
<span class="t" style="left:11.0px;top:119.6px;font-size:12.1px;line-height:18px;color:#3a3a3a;transform:scaleX(0.9292);">Slide</span>
<span class="t" style="left:73.5px;top:103.6px;font-size:12.1px;line-height:18px;color:#3a3a3a;transform:scaleX(0.9163);">Table</span>
<span class="t" style="left:126.0px;top:103.6px;font-size:12.1px;line-height:18px;color:#3a3a3a;transform:scaleX(0.9614);">Pictures</span>
<span class="t" style="left:173.0px;top:103.6px;font-size:12.1px;line-height:18px;color:#3a3a3a;transform:scaleX(0.9479);">Screenshot</span>
<span class="t" style="left:244.0px;top:103.6px;font-size:12.1px;line-height:18px;color:#3a3a3a;">Photo</span>
<span class="t" style="left:236.0px;top:119.6px;font-size:12.1px;line-height:18px;color:#3a3a3a;transform:scaleX(1.1085);">Album</span>
<span class="t" style="left:304.0px;top:103.6px;font-size:12.1px;line-height:18px;color:#3a3a3a;transform:scaleX(0.9018);">Shapes</span>
<span class="t" style="left:351.0px;top:103.6px;font-size:12.1px;line-height:18px;color:#3a3a3a;transform:scaleX(0.9686);">Icons</span>
<span class="t" style="left:405.5px;top:103.6px;font-size:12.1px;line-height:18px;color:#3a3a3a;transform:scaleX(0.9051);">3D</span>
<span class="t" style="left:388.5px;top:119.6px;font-size:12.1px;line-height:18px;color:#3a3a3a;transform:scaleX(1.0128);">Models</span>
<span class="t" style="left:443.0px;top:103.6px;font-size:12.1px;line-height:18px;color:#3a3a3a;transform:scaleX(0.9787);">SmartArt</span>
<span class="t" style="left:499.8px;top:103.6px;font-size:12.1px;line-height:18px;color:#3a3a3a;transform:scaleX(0.9399);">Chart</span>
<span class="t" style="left:573.9px;top:78.6px;font-size:12.1px;line-height:18px;color:#3a3a3a;transform:scaleX(0.9794);">Get Add-ins</span>
<span class="t" style="left:573.9px;top:110.6px;font-size:12.1px;line-height:18px;color:#3a3a3a;transform:scaleX(1.0179);">My Add-ins</span>
<span class="t" style="left:679.0px;top:103.6px;font-size:12.1px;line-height:18px;color:#3a3a3a;transform:scaleX(1.0187);">Zoom</span>
<span class="t" style="left:726.0px;top:103.6px;font-size:12.1px;line-height:18px;color:#a6a6a6;transform:scaleX(0.9690);">Link</span>
<span class="t" style="left:761.5px;top:103.6px;font-size:12.1px;line-height:18px;color:#a6a6a6;transform:scaleX(1.0112);">Action</span>
<span class="t" style="left:818.5px;top:103.6px;font-size:12.1px;line-height:18px;color:#3a3a3a;transform:scaleX(1.0206);">Comment</span>
<span class="t" style="left:900.9px;top:103.6px;font-size:12.1px;line-height:18px;color:#3a3a3a;transform:scaleX(0.9375);">Text</span>
<span class="t" style="left:902.3px;top:119.6px;font-size:12.1px;line-height:18px;color:#3a3a3a;transform:scaleX(0.8972);">Box</span>
<span class="t" style="left:940.8px;top:103.6px;font-size:12.1px;line-height:18px;color:#3a3a3a;transform:scaleX(0.9402);">Header</span>
<span class="t" style="left:935.4px;top:119.6px;font-size:12.1px;line-height:18px;color:#3a3a3a;transform:scaleX(1.0045);">&amp; Footer</span>
<span class="t" style="left:987.1px;top:103.6px;font-size:12.1px;line-height:18px;color:#3a3a3a;transform:scaleX(1.0081);">WordArt</span>
<span class="t" style="left:1075.5px;top:103.6px;font-size:12.1px;line-height:18px;color:#3a3a3a;transform:scaleX(0.9634);">Equation</span>
<span class="t" style="left:1127.0px;top:103.6px;font-size:12.1px;line-height:18px;color:#a6a6a6;transform:scaleX(0.9919);">Symbol</span>
<span class="t" style="left:1192.0px;top:103.6px;font-size:12.1px;line-height:18px;color:#3a3a3a;transform:scaleX(0.9603);">Video</span>
<span class="t" style="left:1233.5px;top:103.6px;font-size:12.1px;line-height:18px;color:#3a3a3a;">Audio</span>
<span class="t" style="left:1282.0px;top:103.6px;font-size:12.1px;line-height:18px;color:#3a3a3a;transform:scaleX(0.9132);">Screen</span>
<span class="t" style="left:1272.5px;top:119.6px;font-size:12.1px;line-height:18px;color:#3a3a3a;transform:scaleX(0.9615);">Recording</span>
<span class="t" style="left:14.5px;top:142.7px;font-size:12px;line-height:18px;color:#444444;transform:scaleX(0.8719);">Slides</span>
<span class="t" style="left:71.0px;top:142.7px;font-size:12px;line-height:18px;color:#444444;transform:scaleX(0.9081);">Tables</span>
<span class="t" style="left:187.0px;top:142.7px;font-size:12px;line-height:18px;color:#444444;transform:scaleX(0.9019);">Images</span>
<span class="t" style="left:388.3px;top:142.7px;font-size:12px;line-height:18px;color:#444444;">Illustrations</span>
<span class="t" style="left:584.0px;top:142.7px;font-size:12px;line-height:18px;color:#444444;transform:scaleX(0.9831);">Add-ins</span>
<span class="t" style="left:724.5px;top:142.7px;font-size:12px;line-height:18px;color:#444444;transform:scaleX(0.8924);">Links</span>
<span class="t" style="left:818.5px;top:142.7px;font-size:12px;line-height:18px;color:#444444;transform:scaleX(0.9135);">Comments</span>
<span class="t" style="left:964.0px;top:142.7px;font-size:12px;line-height:18px;color:#444444;transform:scaleX(0.8857);">Text</span>
<span class="t" style="left:1100.5px;top:142.7px;font-size:12px;line-height:18px;color:#444444;transform:scaleX(0.8910);">Symbols</span>
<span class="t" style="left:1242.5px;top:142.7px;font-size:12px;line-height:18px;color:#444444;transform:scaleX(0.8566);">Media</span>
<span class="t" style="left:11.5px;top:172.9px;font-size:15.6px;line-height:23px;color:#d04a27;">1</span>
<span class="t" style="left:8.0px;top:709.0px;font-size:12px;line-height:18px;color:#565452;transform:scaleX(0.9409);">Slide 1 of 1</span>
<span class="t" style="left:115.6px;top:709.0px;font-size:12px;line-height:18px;color:#565452;transform:scaleX(0.9359);">English (India)</span>
<span class="t" style="left:223.3px;top:709.0px;font-size:12px;line-height:18px;color:#565452;transform:scaleX(0.9434);">Accessibility: Investigate</span>
<span class="t" style="left:678.0px;top:709.0px;font-size:12px;line-height:18px;color:#565452;transform:scaleX(0.9951);">Downloading missing fonts...</span>
<span class="t" style="left:959.8px;top:709.0px;font-size:12px;line-height:18px;color:#565452;transform:scaleX(0.9184);">Notes</span>
<span class="t" style="left:1313.4px;top:708.6px;font-size:12px;line-height:18px;color:#565452;transform:scaleX(0.8572);">72%</span>
<span class="t" style="left:951.9px;top:737.7px;font-size:15.3px;line-height:23px;color:#1a1a1a;transform:scaleX(0.8483);">34°C</span>
<span class="t" style="left:990.4px;top:737.7px;font-size:15.3px;line-height:23px;color:#1a1a1a;transform:scaleX(0.9280);">Mostly cloudy</span>
<span class="t" style="left:1213.2px;top:738.7px;font-size:12.4px;line-height:19px;color:#1a1a1a;transform:scaleX(0.8526);">ENG</span>
<span class="t" style="left:1264.4px;top:730.0px;font-size:12px;line-height:18px;color:#1a1a1a;transform:scaleX(0.8957);">14:49</span>
<span class="t" style="left:1248.7px;top:748.4px;font-size:12px;line-height:18px;color:#1a1a1a;transform:scaleX(0.9497);">29-05-2022</span>
<span class="t" style="left:1337.3px;top:747.2px;font-size:10.5px;line-height:16px;color:#1a1a1a;">3</span>
</div>
</div>
</body></html>
